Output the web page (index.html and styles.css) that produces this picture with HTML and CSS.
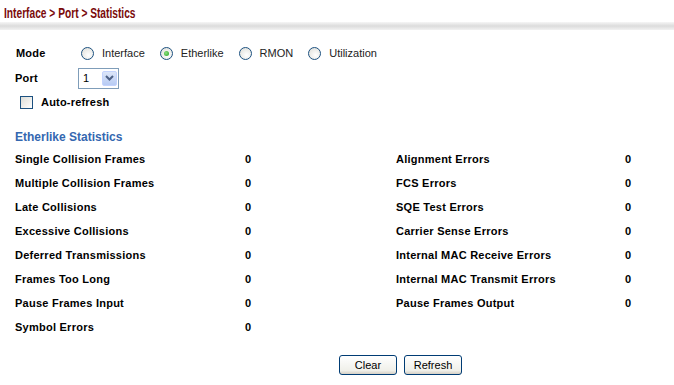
FILE: index.html
```html
<!DOCTYPE html>
<html lang="en">
<head>
  <meta charset="UTF-8" />
  <title>Interface > Port > Statistics</title>
  <link rel="stylesheet" href="styles.css">
</head>
<body>
  <div class="title"><span>Interface &gt; Port &gt; Statistics</span></div>
  <div class="title-bar"></div>

  <div class="content">
    <div class="row mode-row">
      <span class="field-label">Mode</span>
      <label class="radio"><input type="radio" name="mode"><span>Interface</span></label>
      <label class="radio"><input type="radio" name="mode" checked><span>Etherlike</span></label>
      <label class="radio"><input type="radio" name="mode"><span>RMON</span></label>
      <label class="radio"><input type="radio" name="mode"><span>Utilization</span></label>
    </div>
    <div class="row port-row">
      <span class="field-label">Port</span>
      <div class="select">
        <span class="select-value">1</span>
        <span class="select-btn">
          <svg width="9" height="6" viewBox="0 0 9 6"><path d="M1 1 L4.5 4.5 L8 1" fill="none" stroke="#4d6185" stroke-width="2"/></svg>
        </span>
      </div>
    </div>
    <label class="check-row"><input type="checkbox"><span>Auto-refresh</span></label>

    <h3 class="section-title">Etherlike Statistics</h3>
    <div class="stats">
      <span>Single Collision Frames</span><span>0</span><span>Alignment Errors</span><span>0</span>
      <span>Multiple Collision Frames</span><span>0</span><span>FCS Errors</span><span>0</span>
      <span>Late Collisions</span><span>0</span><span>SQE Test Errors</span><span>0</span>
      <span>Excessive Collisions</span><span>0</span><span>Carrier Sense Errors</span><span>0</span>
      <span>Deferred Transmissions</span><span>0</span><span>Internal MAC Receive Errors</span><span>0</span>
      <span>Frames Too Long</span><span>0</span><span>Internal MAC Transmit Errors</span><span>0</span>
      <span>Pause Frames Input</span><span>0</span><span>Pause Frames Output</span><span>0</span>
      <span>Symbol Errors</span><span>0</span><span></span><span></span>
    </div>

    <div class="buttons">
      <button type="button">Clear</button>
      <button type="button">Refresh</button>
    </div>
  </div>
</body>
</html>
```

FILE: styles.css
```css
body {
  margin: 0;
  font-family: "Liberation Sans", Arial, sans-serif;
  font-size: 11px;
  color: #000;
  background: #fff;
}
.title {
  font-weight: bold;
  font-size: 15px;
  color: #7a0a0a;
  padding: 4px 0 0 4px;
  height: 17px;
}
.title span {
  display: inline-block;
  transform: scaleX(0.68);
  transform-origin: left center;
  white-space: nowrap;
}
.title-bar {
  height: 8px;
  margin-top: 1px;
  background: linear-gradient(#f6f6f6, #dcdcdc 50%, #f2f2f2);
}
.content {
  padding: 14px 0 0 15px;
}
.row {
  display: flex;
  align-items: center;
}
.field-label {
  font-weight: bold;
  width: 66px;
  letter-spacing: 0.2px;
}
.mode-row {
  height: 18px;
  margin-left: 1px;
}
.mode-row .field-label {
  width: 65px;
}
.radio {
  display: flex;
  align-items: center;
  margin-right: 15px;
  color: #222;
}
.radio input {
  appearance: none;
  margin: 0 8px 0 0;
  width: 13px;
  height: 13px;
  border-radius: 50%;
  border: 1px solid #1c5180;
  background: radial-gradient(circle at 60% 65%, #ffffff, #dcdcd6);
  position: relative;
}
.radio input:checked::after {
  content: "";
  position: absolute;
  left: 3px;
  top: 3px;
  width: 5px;
  height: 5px;
  border-radius: 50%;
  background: radial-gradient(circle at 40% 40%, #8fe07f, #21a121);
}
.port-row {
  margin-top: 6px;
  height: 20px;
}
.port-row .field-label {
  width: 63px;
}
.select {
  display: flex;
  align-items: center;
  width: 37px;
  height: 17px;
  border: 1px solid #7f9db9;
  padding: 1px;
}
.select-value {
  flex: 1;
  padding-left: 3px;
}
.select-btn {
  width: 15px;
  height: 15px;
  background: linear-gradient(#dce6f8, #b7cbf4);
  border: 1px solid #c3d3fd;
  border-radius: 2px;
  display: flex;
  align-items: center;
  justify-content: center;
  box-sizing: border-box;
}
.check-row {
  display: flex;
  align-items: center;
  margin: 7px 0 0 5px;
  height: 14px;
  font-weight: bold;
  letter-spacing: 0.2px;
}
.check-row input {
  appearance: none;
  width: 13px;
  height: 13px;
  margin: 0 8px 0 0;
  border: 1px solid #1c5180;
  background: linear-gradient(135deg, #dcdcd6, #fff);
}
.section-title {
  margin: 21px 0 0;
  font-size: 12px;
  color: #3467b0;
  height: 17px;
}
.stats {
  display: grid;
  grid-template-columns: 230px 151px 229px auto;
  grid-auto-rows: 24px;
  margin-top: 0;
  font-weight: bold;
  letter-spacing: 0.25px;
  align-items: center;
}
.buttons {
  display: flex;
  gap: 7px;
  margin: 16px 0 0 324px;
}
.buttons button {
  font-family: "Liberation Sans", Arial, sans-serif;
  font-size: 11px;
  width: 58px;
  height: 20px;
  padding: 0;
  border: 1px solid #003c74;
  border-radius: 3px;
  background: linear-gradient(#ffffff, #f0f0ea 80%, #d6d0c5);
  color: #000;
}
```
